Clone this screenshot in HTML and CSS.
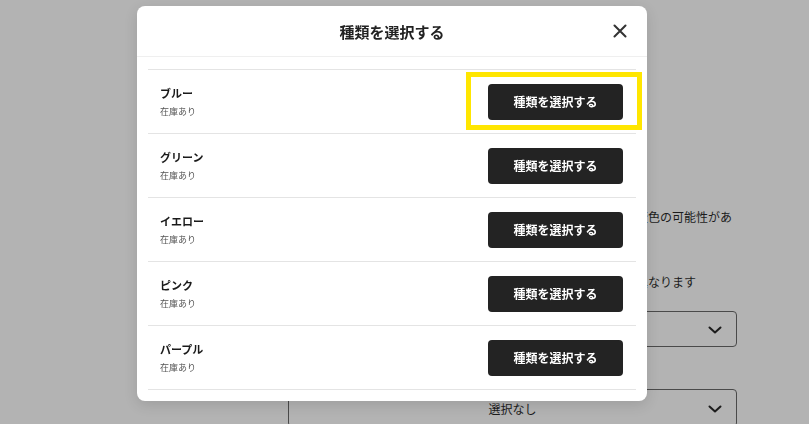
FILE: index.html
```html
<!DOCTYPE html>
<html lang="ja">
<head>
    <meta charset="UTF-8">
    <meta name="viewport" content="width=device-width, initial-scale=1.0">
    <title>種類を選択する</title>
    <link rel="stylesheet" href="styles.css">
</head>
<body>
    <div class="page">
        <p class="note">変色の可能性があ</p>
        <p class="note note-second">異なります</p>

        <div class="select-box">
            <span class="select-value"></span>
            <svg class="chevron" width="14" height="8" viewBox="0 0 14 8"><path d="M1.5 1.5 L7 6.5 L12.5 1.5" fill="none" stroke="#1c1c1c" stroke-width="2" stroke-linecap="round" stroke-linejoin="round"/></svg>
        </div>

        <div class="select-box select-second">
            <span class="select-value">選択なし</span>
            <svg class="chevron" width="14" height="8" viewBox="0 0 14 8"><path d="M1.5 1.5 L7 6.5 L12.5 1.5" fill="none" stroke="#1c1c1c" stroke-width="2" stroke-linecap="round" stroke-linejoin="round"/></svg>
        </div>
    </div>

    <!-- Variant modal -->
    <div class="modal">
        <div class="modal-header">
            <span class="header-spacer"></span>
            <h2>種類を選択する</h2>
            <button class="close-btn" type="button" aria-label="閉じる">
                <svg width="14" height="14" viewBox="0 0 14 14"><path d="M1.5 1.5 L12.5 12.5 M12.5 1.5 L1.5 12.5" stroke="#333" stroke-width="2" stroke-linecap="round"/></svg>
            </button>
        </div>

        <div class="modal-body">
            <div class="variant-row">
                <div class="variant-info">
                    <div class="variant-name">ブルー</div>
                    <div class="variant-stock">在庫あり</div>
                </div>
                <button class="select-btn" type="button">種類を選択する</button>
                <span class="highlight"></span>
            </div>
            <div class="variant-row">
                <div class="variant-info">
                    <div class="variant-name">グリーン</div>
                    <div class="variant-stock">在庫あり</div>
                </div>
                <button class="select-btn" type="button">種類を選択する</button>
            </div>
            <div class="variant-row">
                <div class="variant-info">
                    <div class="variant-name">イエロー</div>
                    <div class="variant-stock">在庫あり</div>
                </div>
                <button class="select-btn" type="button">種類を選択する</button>
            </div>
            <div class="variant-row">
                <div class="variant-info">
                    <div class="variant-name">ピンク</div>
                    <div class="variant-stock">在庫あり</div>
                </div>
                <button class="select-btn" type="button">種類を選択する</button>
            </div>
            <div class="variant-row">
                <div class="variant-info">
                    <div class="variant-name">パープル</div>
                    <div class="variant-stock">在庫あり</div>
                </div>
                <button class="select-btn" type="button">種類を選択する</button>
            </div>
        </div>
    </div>
</body>
</html>
```

FILE: styles.css
```css
/* Reset & Base Styles */
* {
    box-sizing: border-box;
    margin: 0;
    padding: 0;
    font-family: 'Noto Sans CJK JP', 'Noto Sans', sans-serif;
}

body {
    background-color: #b3b3b3;
    height: 100vh;
    overflow: hidden;
    color: #1c1c1c;
}

/* Page behind the overlay */
.page {
    margin-left: 288px;
    width: 449px;
    padding-top: 208px;
}

.note {
    padding-left: 348px;
    font-size: 12px;
    line-height: 18px;
    white-space: nowrap;
    color: #1c1c1c;
}

.note-second {
    margin-top: 47px;
}

.select-box {
    position: relative;
    margin-top: 20px;
    height: 36px;
    border: 1px solid #4a4a4a;
    border-radius: 4px;
    display: flex;
    align-items: center;
    justify-content: center;
}

.select-second {
    margin-top: 42px;
    height: 38px;
}

.select-value {
    font-size: 12px;
    color: #1c1c1c;
}

.chevron {
    position: absolute;
    right: 14px;
    top: 50%;
    margin-top: -3px;
}

/* Modal */
.modal {
    position: fixed;
    left: 137px;
    top: 6px;
    width: 510px;
    background-color: #ffffff;
    border-radius: 8px;
    box-shadow: 0 4px 14px rgba(0, 0, 0, 0.12);
}

.modal-header {
    height: 51px;
    padding: 0 17px;
    display: flex;
    align-items: center;
    border-bottom: 1px solid #efefef;
}

.header-spacer {
    width: 20px;
}

.modal-header h2 {
    flex: 1;
    text-align: center;
    font-size: 15px;
    font-weight: 700;
    color: #222;
    padding-top: 1px;
}

.close-btn {
    width: 20px;
    height: 20px;
    border: none;
    background: none;
    display: flex;
    align-items: center;
    justify-content: center;
    cursor: pointer;
}

.modal-body {
    padding: 12px 11px 11px;
}

.variant-row {
    position: relative;
    height: 64px;
    padding: 0 13px 0 12px;
    border-top: 1px solid #e4e4e4;
    display: flex;
    align-items: center;
    justify-content: space-between;
}

.variant-row:last-child {
    height: 65px;
    border-bottom: 1px solid #e4e4e4;
}

.variant-name {
    font-size: 11px;
    line-height: 14px;
    font-weight: 700;
    color: #1a1a1a;
    margin-bottom: 6px;
}

.variant-stock {
    font-size: 9px;
    line-height: 12px;
    color: #555;
}

.select-btn {
    width: 135px;
    height: 36px;
    background-color: #232323;
    color: #fff;
    border: none;
    border-radius: 4px;
    font-size: 12px;
    font-weight: 700;
    cursor: pointer;
}

/* Annotation frame around the first button */
.highlight {
    position: absolute;
    left: 318px;
    top: 2px;
    width: 176px;
    height: 58px;
    border: 5px solid #ffe600;
    pointer-events: none;
}
```
